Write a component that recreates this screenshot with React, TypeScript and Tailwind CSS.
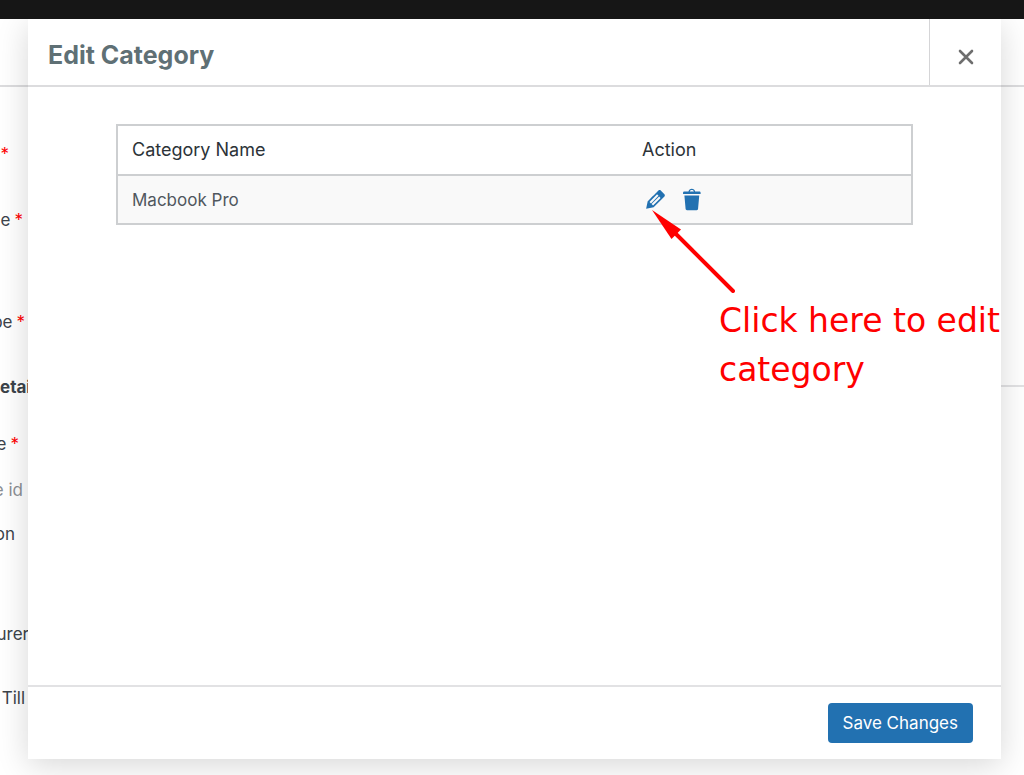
import type { ReactNode } from "react";

function EditIcon() {
  return (
    <svg viewBox="0 0 20 20" className="size-[27px] fill-current">
      <path d="M13.89 3.39l2.71 2.72c.46.46.42 1.24.03 1.64l-8.01 8.02-5.56 1.16 1.16-5.58s7.6-7.63 7.99-8.03c.39-.39 1.22-.39 1.68.07zm-2.73 2.79l-5.59 5.61 1.11 1.11 5.54-5.65zm-2.97 8.23l5.58-5.6-1.07-1.08-5.59 5.6z" />
    </svg>
  );
}

function TrashIcon() {
  return (
    <svg viewBox="0 0 20 20" className="size-[27px] fill-current">
      <path d="M12 4h3c.6 0 1 .4 1 1v1H3V5c0-.6.5-1 1-1h3c.2-1.1 1.3-2 2.5-2s2.3.9 2.5 2zM8 4h3c-.2-.6-.9-1-1.5-1S8.2 3.4 8 4zM4 7h11l-.9 10.1c0 .5-.5.9-1 .9H5.9c-.5 0-.9-.4-1-.9L4 7z" />
    </svg>
  );
}

function CloseIcon() {
  return (
    <svg viewBox="0 0 16 16" className="size-4">
      <path
        d="M2 2l12 12M14 2L2 14"
        stroke="#6e6e6e"
        strokeWidth="2.6"
        strokeLinecap="round"
      />
    </svg>
  );
}

function FormLabel({
  children,
  required,
  className,
}: {
  children?: ReactNode;
  required?: boolean;
  className: string;
}) {
  return (
    <div
      className={`flex h-6 items-center justify-end gap-1 overflow-hidden whitespace-nowrap ${className}`}
    >
      {children && <span>{children}</span>}
      {required && <span className="text-[#ff0000]">*</span>}
    </div>
  );
}

// The form that stays visible around the edges of the dialog
function AssetForm() {
  return (
    <div className="flex-1">
      <div className="h-[68px] border-b-2 border-[#dcdcde]" />
      <div className="flex justify-between">
        <div className="w-[29px] text-[17px] text-[#3c434a]">
          <FormLabel required className="mt-14 pr-5" />
          <FormLabel required className="mt-[42px] pr-1.5">
            e
          </FormLabel>
          <FormLabel required className="mt-[78px] pr-1">
            pe
          </FormLabel>
          <h2 className="mt-10 h-6 overflow-hidden font-bold">etails</h2>
          <FormLabel required className="mt-[34px] pr-2.5">
            e
          </FormLabel>
          <FormLabel className="mt-[22px] pr-1.5 text-[#8c8f94]">e id</FormLabel>
          <FormLabel className="mt-5 pr-3.5">on</FormLabel>
          <FormLabel className="mt-[76px]">urer</FormLabel>
          <FormLabel className="mt-10 pr-1">Till</FormLabel>
        </div>
        <div className="mt-[298px] h-0.5 w-6 bg-[#e2e2e4]" />
      </div>
    </div>
  );
}

function Annotation() {
  return (
    <div className="pointer-events-none absolute top-[85px] left-[535px] w-[350px] text-[#ff0000]">
      <svg viewBox="0 0 84 84" className="size-[84px]">
        <path d="M1 1L30 20.500L20.500 30z" fill="#ff0000" />
        <path
          d="M24 24L82 82"
          stroke="#ff0000"
          strokeWidth="4"
          strokeLinecap="round"
        />
      </svg>
      <p className="mt-[3px] pl-[68px] font-['DejaVu_Sans',sans-serif] text-[33px] leading-[49px] whitespace-nowrap">
        Click here to edit
        <br />
        category
      </p>
    </div>
  );
}

export default function App() {
  return (
    <div className="relative flex h-screen flex-col overflow-hidden bg-white font-['Inter',sans-serif]">
      <div className="h-[19px] shrink-0 bg-[#161616]" />
      <AssetForm />

      <div
        role="dialog"
        aria-labelledby="dialog-title"
        className="absolute top-[19px] right-[23px] bottom-4 left-7 flex flex-col bg-white shadow-[0_6px_30px_rgba(0,0,0,0.16)] [clip-path:inset(0_-40px_-40px_-40px)]"
      >
        <header className="flex h-[68px] border-b-2 border-[#dcdcde]">
          <h1
            id="dialog-title"
            className="flex-1 pt-4 pl-5 text-[25px] leading-10 font-bold text-[#5f7075]"
          >
            Edit Category
          </h1>
          <button
            type="button"
            aria-label="Close"
            className="flex w-[72px] items-center justify-center border-l border-[#d5d5d7] pt-2.5"
          >
            <CloseIcon />
          </button>
        </header>

        <main className="flex-1 px-[88px] pt-[37px]">
          <div className="relative">
            <table className="w-full table-fixed border-collapse border-2 border-[#cdcfd1] text-left leading-6">
              <thead>
                <tr className="h-[50px] border-b-2 border-[#cdcfd1] text-lg text-[#2c3338]">
                  <th className="w-[511px] pl-3.5 font-normal">Category Name</th>
                  <th className="pl-3.5 font-normal">Action</th>
                </tr>
              </thead>
              <tbody>
                <tr className="h-[49px] bg-[#f9f9f9] text-[17px] text-[#50575e]">
                  <td className="pl-3.5">Macbook Pro</td>
                  <td className="pl-3.5">
                    <div className="flex gap-2.5 text-[#2271b1]">
                      <button type="button" aria-label="Edit category">
                        <EditIcon />
                      </button>
                      <button type="button" aria-label="Delete category">
                        <TrashIcon />
                      </button>
                    </div>
                  </td>
                </tr>
              </tbody>
            </table>
            <Annotation />
          </div>
        </main>

        <footer className="flex h-[74px] items-center justify-end border-t-2 border-[#e2e2e4] px-7">
          <button
            type="button"
            className="h-10 rounded-sm bg-[#2271b1] px-[15px] pt-0.5 text-[17px] text-white"
          >
            Save Changes
          </button>
        </footer>
      </div>
    </div>
  );
}
